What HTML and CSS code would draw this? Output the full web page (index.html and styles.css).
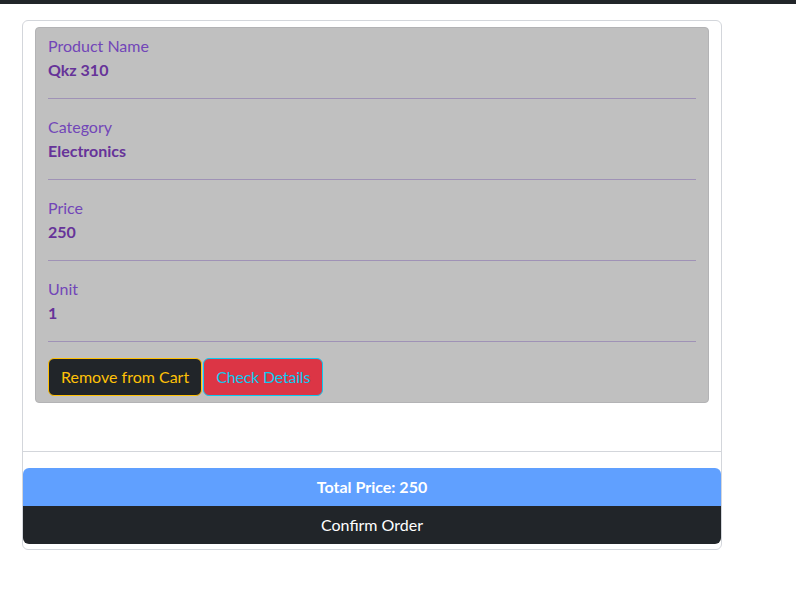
FILE: index.html
```html
<!DOCTYPE html>
<html>
<head>
<meta charset="utf-8">
<link rel="stylesheet" href="styles.css">
</head>
<body>
<div class="topbar"></div>
<main class="page">
  <section class="cart">
    <div class="cart-body">
      <div class="item">
        <div class="field">
          <div class="label">Product Name</div>
          <div class="value">Qkz 310</div>
        </div>
        <hr class="sep">
        <div class="field">
          <div class="label">Category</div>
          <div class="value">Electronics</div>
        </div>
        <hr class="sep">
        <div class="field">
          <div class="label">Price</div>
          <div class="value">250</div>
        </div>
        <hr class="sep">
        <div class="field">
          <div class="label">Unit</div>
          <div class="value">1</div>
        </div>
        <hr class="sep">
        <div class="actions">
          <button class="btn btn-remove">Remove from Cart</button>
          <button class="btn btn-details">Check Details</button>
        </div>
      </div>
    </div>
    <div class="cart-footer">
      <div class="total">Total Price: 250</div>
      <button class="confirm">Confirm Order</button>
    </div>
  </section>
</main>
</body>
</html>
```

FILE: styles.css
```css
* { box-sizing: border-box; }
html, body { margin: 0; padding: 0; background: #fff; }
body {
  font-family: Lato, "Noto Sans", sans-serif;
  font-size: 16px;
  line-height: 1.5;
  color: #212529;
}
.topbar { height: 4px; background: #212529; }
.page { padding: 16px 22px; }
.cart {
  width: 700px;
  border: 1px solid #d3d6db;
  border-radius: 6px;
  background: #fff;
}
.cart-body { padding: 6px 12px 48px; }
.item {
  background: #c0c0c0;
  border: 1px solid #b3b3b5;
  border-radius: 4px;
  padding: 6px 12px;
}
.label { color: #7246b8; }
.value { color: #663399; font-weight: 700; }
.sep {
  margin: 16px 0;
  border: 0;
  border-top: 1px solid #9f92b6;
}
.actions { display: flex; gap: 1px; }
.btn {
  font: inherit;
  line-height: 24px;
  padding: 6px 12px;
  border-radius: 6px;
  border: 1px solid;
  cursor: pointer;
}
.btn-remove { background: #212529; color: #ffc107; border-color: #ffc107; }
.btn-details { background: #dc3545; color: #0dcaf0; border-color: #0dcaf0; letter-spacing: -0.2px; }
.cart-footer {
  border-top: 1px solid #d3d6db;
  padding: 16px 0 5px;
}
.total {
  background: #60a0ff;
  color: #fff;
  font-weight: 700;
  text-align: center;
  padding: 7px 0;
  border-radius: 6px 6px 0 0;
}
.confirm {
  display: block;
  width: 100%;
  font: inherit;
  line-height: 24px;
  padding: 7px 0;
  border: 0;
  background: #212529;
  color: #fff;
  text-align: center;
  border-radius: 0 0 6px 6px;
}
```
